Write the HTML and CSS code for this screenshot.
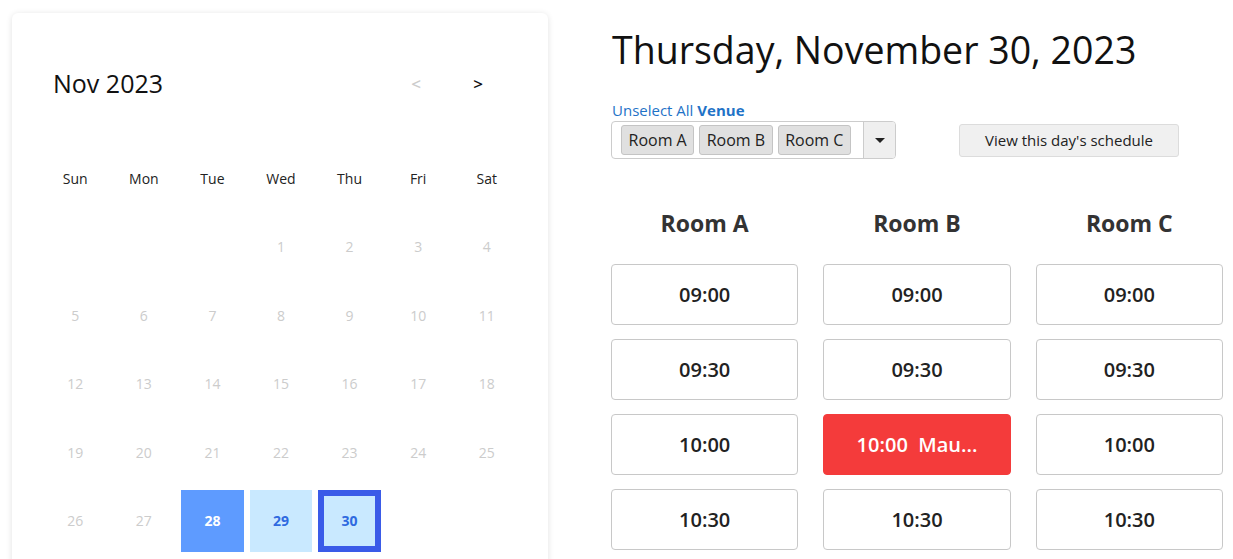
FILE: index.html
```html
<!DOCTYPE html>
<html lang="en">
<head>
    <meta charset="UTF-8">
    <meta name="viewport" content="width=device-width, initial-scale=1.0">
    <title>Room Booking</title>
    <link rel="stylesheet" href="styles.css">
</head>
<body>
    <div class="page">
        <div class="calendar">
            <div class="cal-header">
                <span class="cal-title">Nov 2023</span>
                <div class="cal-nav">
                    <button class="nav-btn disabled">&lt;</button>
                    <button class="nav-btn">&gt;</button>
                </div>
            </div>
            <div class="cal-grid">
                <div class="weekday">Sun</div>
                <div class="weekday">Mon</div>
                <div class="weekday">Tue</div>
                <div class="weekday">Wed</div>
                <div class="weekday">Thu</div>
                <div class="weekday">Fri</div>
                <div class="weekday">Sat</div>

                <div class="day empty"></div>
                <div class="day empty"></div>
                <div class="day empty"></div>
                <div class="day">1</div>
                <div class="day">2</div>
                <div class="day">3</div>
                <div class="day">4</div>

                <div class="day">5</div>
                <div class="day">6</div>
                <div class="day">7</div>
                <div class="day">8</div>
                <div class="day">9</div>
                <div class="day">10</div>
                <div class="day">11</div>

                <div class="day">12</div>
                <div class="day">13</div>
                <div class="day">14</div>
                <div class="day">15</div>
                <div class="day">16</div>
                <div class="day">17</div>
                <div class="day">18</div>

                <div class="day">19</div>
                <div class="day">20</div>
                <div class="day">21</div>
                <div class="day">22</div>
                <div class="day">23</div>
                <div class="day">24</div>
                <div class="day">25</div>

                <div class="day">26</div>
                <div class="day">27</div>
                <div class="day today">28</div>
                <div class="day available">29</div>
                <div class="day available selected">30</div>
            </div>
        </div>

        <div class="schedule">
            <h1 class="date-title">Thursday, November 30, 2023</h1>

            <div class="venue-label">
                <a href="#" class="unselect">Unselect All</a> <strong>Venue</strong>
            </div>
            <div class="venue-row">
                <div class="multi-select">
                    <div class="chips">
                        <span class="chip">Room A</span>
                        <span class="chip">Room B</span>
                        <span class="chip">Room C</span>
                    </div>
                    <div class="dropdown-toggle"><span class="caret"></span></div>
                </div>
                <button class="day-btn">View this day's schedule</button>
            </div>

            <div class="rooms">
                <div class="room">
                    <h2 class="room-name">Room A</h2>
                    <button class="slot">09:00</button>
                    <button class="slot">09:30</button>
                    <button class="slot">10:00</button>
                    <button class="slot">10:30</button>
                </div>
                <div class="room">
                    <h2 class="room-name">Room B</h2>
                    <button class="slot">09:00</button>
                    <button class="slot">09:30</button>
                    <button class="slot booked">10:00&nbsp; Mau...</button>
                    <button class="slot">10:30</button>
                </div>
                <div class="room">
                    <h2 class="room-name">Room C</h2>
                    <button class="slot">09:00</button>
                    <button class="slot">09:30</button>
                    <button class="slot">10:00</button>
                    <button class="slot">10:30</button>
                </div>
            </div>
        </div>
    </div>
</body>
</html>
```

FILE: styles.css
```css
body {
    margin: 0;
    font-family: "Open Sans", "Liberation Sans", sans-serif;
    color: #222;
    background: #fff;
    overflow: hidden;
}
.page {
    display: flex;
    align-items: flex-start;
    gap: 63px;
    padding: 13px 10px 0 12px;
}

/* calendar */
.calendar {
    width: 536px;
    height: 600px;
    box-sizing: border-box;
    padding: 45px 27px 0 29px;
    background: #fff;
    border-radius: 6px;
    box-shadow: 0 1px 6px rgba(0, 0, 0, 0.12);
    flex-shrink: 0;
}
.cal-header {
    display: flex;
    align-items: center;
    justify-content: space-between;
    height: 50px;
    padding: 0 12px 0 12px;
}
.cal-title {
    font-size: 25px;
    font-weight: 400;
    color: #111;
}
.cal-nav { display: flex; }
.nav-btn {
    width: 62px;
    height: 40px;
    border: none;
    background: none;
    font-family: inherit;
    font-size: 17px;
    font-weight: 600;
    color: #111;
    cursor: pointer;
}
.nav-btn.disabled { color: #ccc; }
.cal-grid {
    display: grid;
    grid-template-columns: repeat(7, 1fr);
    margin-top: 36px;
}
.weekday, .day {
    margin: 3px;
    height: 62.5px;
    display: flex;
    align-items: center;
    justify-content: center;
    font-size: 14px;
}
.weekday { color: #222; }
.day { color: #ccc; }
.day.today {
    background: #5e9bff;
    color: #fff;
    font-weight: 700;
}
.day.available {
    background: #c9e9ff;
    color: #2f6ae0;
    font-weight: 700;
}
.day.selected {
    border: 6px solid #3a5be8;
    box-sizing: border-box;
}

/* schedule */
.schedule {
    width: 612px;
    flex-shrink: 0;
}
.date-title {
    margin: 15px 0 0 1px;
    font-size: 37.5px;
    font-weight: 400;
    line-height: 43px;
    color: #111;
}
.venue-label {
    margin: 29px 0 0 1px;
    font-size: 15px;
    line-height: 20px;
    color: #1f73c7;
}
.unselect {
    color: #1f73c7;
    text-decoration: none;
}
.venue-label strong { font-weight: 700; }
.venue-row {
    display: flex;
    align-items: center;
    margin-top: 1px;
}
.multi-select {
    display: flex;
    width: 285px;
    height: 38px;
    box-sizing: border-box;
    border: 1px solid #ccc;
    border-radius: 4px;
    overflow: hidden;
}
.chips {
    flex: 1;
    display: flex;
    align-items: center;
    gap: 5px;
    padding-left: 9px;
}
.chip {
    height: 30px;
    box-sizing: border-box;
    padding: 0 6.5px;
    display: flex;
    align-items: center;
    font-size: 16px;
    color: #222;
    background: #e0e0e0;
    border: 1px solid #c4c4c4;
    border-radius: 3px;
}
.dropdown-toggle {
    width: 31px;
    display: flex;
    align-items: center;
    justify-content: center;
    background: #efefef;
    border-left: 1px solid #ccc;
}
.caret {
    width: 0;
    height: 0;
    border-left: 5px solid transparent;
    border-right: 5px solid transparent;
    border-top: 5px solid #222;
}
.day-btn {
    margin-left: 63px;
    width: 220px;
    height: 33px;
    font-family: inherit;
    font-size: 15px;
    color: #222;
    background: #f0f0f0;
    border: 1px solid #dcdcdc;
    border-radius: 3px;
    cursor: pointer;
}
.rooms {
    display: grid;
    grid-template-columns: repeat(3, 1fr);
    column-gap: 25px;
    margin-top: 49px;
}
.room {
    display: flex;
    flex-direction: column;
    gap: 14px;
}
.room-name {
    margin: 0 0 11px;
    text-align: center;
    font-size: 23px;
    font-weight: 700;
    line-height: 31px;
    color: #333;
}
.slot {
    height: 61px;
    font-family: inherit;
    font-size: 20px;
    font-weight: 600;
    color: #222;
    background: #fff;
    border: 1px solid #c8c8c8;
    border-radius: 4px;
    white-space: pre;
    cursor: pointer;
}
.slot.booked {
    background: #f43b3b;
    border-color: #f43b3b;
    color: #fff;
}
```
